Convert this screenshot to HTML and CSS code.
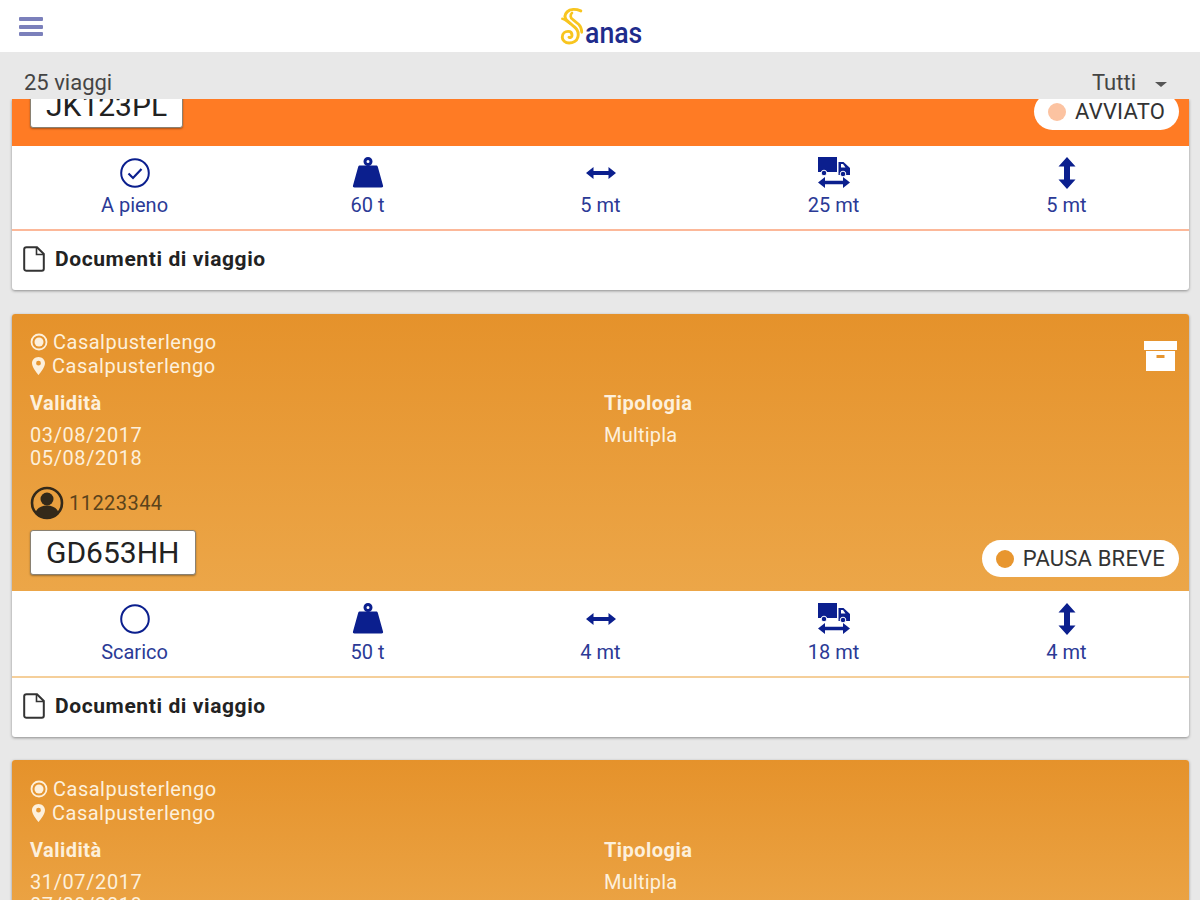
FILE: index.html
```html
<!DOCTYPE html>
<html lang="it">
<head>
  <meta charset="UTF-8" />
  <meta name="viewport" content="width=device-width, initial-scale=1" />
  <title>Anas - Viaggi</title>
  <link rel="stylesheet" href="styles.css">
</head>
<body>
  <svg class="icon-defs" width="0" height="0" aria-hidden="true">
    <defs>
      <symbol id="i-weight" viewBox="0 0 32 32">
        <circle cx="16" cy="4.500" r="3" fill="none" stroke="currentColor" stroke-width="3"/>
        <path d="M8 8.500h16c1 0 1.500.5 1.800 1.300L31 28.500c.4 1.300-.3 2-1.500 2H2.500c-1.200 0-1.900-.7-1.500-2L6.200 9.800C6.500 9 7 8.500 8 8.500z" fill="currentColor"/>
      </symbol>
      <symbol id="i-width" viewBox="0 0 32 32">
        <path d="M1 16l7.500-6v4h15v-4l7.500 6-7.500 6v-4h-15v4z" fill="currentColor"/>
      </symbol>
      <symbol id="i-length" viewBox="0 0 34 32">
        <path d="M1 0h19v15H1z" fill="currentColor"/>
        <path d="M21.500 5h5l6.500 6v7H21.500z" fill="currentColor"/>
        <path d="M24 7h2l2.500 3.500H24z" fill="#fff"/>
        <circle cx="7" cy="16" r="2.800" fill="currentColor" stroke="#fff" stroke-width="1"/>
        <circle cx="26" cy="17" r="2.800" fill="currentColor" stroke="#fff" stroke-width="1"/>
        <path d="M1 25.500l7-5.500v3.800h18V20l7 5.500-7 5.500v-3.800H8V31z" fill="currentColor"/>
      </symbol>
      <symbol id="i-height" viewBox="0 0 20 32">
        <path d="M10 0l8.500 9.500h-5.500v13h5.500L10 32l-8.500-9.500H7v-13H1.500z" fill="currentColor"/>
      </symbol>
      <symbol id="i-doc" viewBox="0 0 22 26">
        <path d="M3.500 1.200h10.500l6.800 6.800v14.800c0 1.200-.9 2-2 2H3.500c-1.200 0-2.300-.8-2.300-2V3.200c0-1.200 1.100-2 2.300-2z" fill="#fff" stroke="currentColor" stroke-width="2"/>
        <path d="M13.500 1.500v7h7" fill="none" stroke="currentColor" stroke-width="1.600"/>
      </symbol>
      <symbol id="i-origin" viewBox="0 0 18 18">
        <circle cx="9" cy="9" r="7.500" fill="none" stroke="currentColor" stroke-width="1.800"/>
        <circle cx="9" cy="9" r="4.500" fill="currentColor"/>
      </symbol>
      <symbol id="i-pin" viewBox="0 0 13 18">
        <path d="M6.500 0C2.900 0 0 2.800 0 6.300 0 11 6.500 18 6.500 18S13 11 13 6.300C13 2.800 10.100 0 6.500 0zm0 8.600a2.400 2.400 0 1 1 0-4.800 2.400 2.400 0 0 1 0 4.800z" fill="currentColor"/>
      </symbol>
      <symbol id="i-driver" viewBox="0 0 34 34">
        <circle cx="17" cy="17" r="15" fill="none" stroke="currentColor" stroke-width="2.600"/>
        <circle cx="17" cy="13" r="6.500" fill="currentColor"/>
        <path d="M5.500 27c1-5 6-7.500 11.500-7.500S27.500 22 28.500 27c-3 3.500-7 5.500-11.500 5.500S8.500 30.500 5.500 27z" fill="currentColor"/>
      </symbol>
      <symbol id="i-archive" viewBox="0 0 33 30">
        <path d="M0 0h33v9H0z" fill="currentColor"/>
        <path d="M2 10h29v20H2zm10.500 4v3h8v-3z" fill="currentColor" fill-rule="evenodd"/>
      </symbol>
    </defs>
  </svg>

  <header class="topbar">
    <button class="menu-btn" aria-label="Menu">
      <span></span><span></span><span></span>
    </button>
    <div class="logo">
      <svg class="logo-mark" viewBox="0 0 24 38" aria-hidden="true">
        <g fill="none" stroke="#f8c51f" stroke-linecap="round">
          <path d="M21 3C16 1 10 1 7 4 4 7 4 10 7 13l7 6c4 3 5 7 4 11-1 4-5 6-9 6-4 0-7-3-7-6 0-4 3-6 6-6 3 0 4 2 4 4s-2 3-3 2" stroke-width="3"/>
          <path d="M12 5c-2 2-2 5 1 7l6 5c2 2 3 5 3 8" stroke-width="2.800"/>
          <path d="M2 11c3 0 5 3 8 5" stroke-width="2.400"/>
        </g>
      </svg>
      <span class="logo-text">anas</span>
    </div>
  </header>

  <div class="toolbar">
    <span class="count">25 viaggi</span>
    <div class="filter"><span>Tutti</span><i class="caret"></i></div>
  </div>

  <main class="list">
    <article class="card card-started card-cut">
      <div class="card-head">
        <div class="plate-row">
          <div class="plate">JK123PL</div>
          <div class="status"><i class="dot dot-started"></i>AVVIATO</div>
        </div>
      </div>
      <div class="stats stats-started">
        <div class="stat">
          <svg class="stat-icon" viewBox="0 0 32 32" aria-hidden="true">
            <circle cx="16" cy="16" r="13.800" fill="none" stroke="currentColor" stroke-width="2"/>
            <path d="M9.500 16.500l4.500 4.500 8.500-9" fill="none" stroke="currentColor" stroke-width="2.200"/>
          </svg>
          <span>A pieno</span>
        </div>
        <div class="stat"><svg class="stat-icon"><use href="#i-weight"/></svg><span>60 t</span></div>
        <div class="stat"><svg class="stat-icon"><use href="#i-width"/></svg><span>5 mt</span></div>
        <div class="stat"><svg class="stat-icon stat-wide"><use href="#i-length"/></svg><span>25 mt</span></div>
        <div class="stat"><svg class="stat-icon"><use href="#i-height"/></svg><span>5 mt</span></div>
      </div>
      <div class="card-foot"><svg class="doc-icon"><use href="#i-doc"/></svg>Documenti di viaggio</div>
    </article>

    <article class="card">
      <div class="card-head">
        <div class="head-top">
          <div class="route">
            <div class="route-line"><svg class="route-origin"><use href="#i-origin"/></svg>Casalpusterlengo</div>
            <div class="route-line"><svg class="route-pin"><use href="#i-pin"/></svg>Casalpusterlengo</div>
          </div>
          <svg class="archive-icon"><use href="#i-archive"/></svg>
        </div>
        <div class="info">
          <div>
            <div class="info-title">Validità</div>
            <div class="info-value">03/08/2017<br>05/08/2018</div>
          </div>
          <div>
            <div class="info-title">Tipologia</div>
            <div class="info-value info-plain">Multipla</div>
          </div>
        </div>
        <div class="driver"><svg class="driver-icon"><use href="#i-driver"/></svg>11223344</div>
        <div class="plate-row">
          <div class="plate">GD653HH</div>
          <div class="status"><i class="dot"></i>PAUSA BREVE</div>
        </div>
      </div>
      <div class="stats">
        <div class="stat">
          <svg class="stat-icon" viewBox="0 0 32 32" aria-hidden="true">
            <circle cx="16" cy="16" r="13.800" fill="none" stroke="currentColor" stroke-width="2"/>
          </svg>
          <span>Scarico</span>
        </div>
        <div class="stat"><svg class="stat-icon"><use href="#i-weight"/></svg><span>50 t</span></div>
        <div class="stat"><svg class="stat-icon"><use href="#i-width"/></svg><span>4 mt</span></div>
        <div class="stat"><svg class="stat-icon stat-wide"><use href="#i-length"/></svg><span>18 mt</span></div>
        <div class="stat"><svg class="stat-icon"><use href="#i-height"/></svg><span>4 mt</span></div>
      </div>
      <div class="card-foot"><svg class="doc-icon"><use href="#i-doc"/></svg>Documenti di viaggio</div>
    </article>

    <article class="card card-last">
      <div class="card-head">
        <div class="head-top">
          <div class="route">
            <div class="route-line"><svg class="route-origin"><use href="#i-origin"/></svg>Casalpusterlengo</div>
            <div class="route-line"><svg class="route-pin"><use href="#i-pin"/></svg>Casalpusterlengo</div>
          </div>
        </div>
        <div class="info">
          <div>
            <div class="info-title">Validità</div>
            <div class="info-value">31/07/2017<br>07/08/2018</div>
          </div>
          <div>
            <div class="info-title">Tipologia</div>
            <div class="info-value info-plain">Multipla</div>
          </div>
        </div>
      </div>
    </article>
  </main>
</body>
</html>
```

FILE: styles.css
```css
* {
  box-sizing: border-box;
}
html, body {
  height: 100%;
}
body {
  margin: 0;
  display: flex;
  flex-direction: column;
  overflow: hidden;
  background-color: #e8e8e8;
  color: #222;
  font-family: Roboto, "Liberation Sans", sans-serif;
  font-size: 20px;
}
.icon-defs {
  position: absolute;
}

/* top bar */
.topbar {
  height: 52px;
  flex: none;
  display: flex;
  justify-content: center;
  position: relative;
  background-color: #fff;
}
.menu-btn {
  position: absolute;
  left: 19px;
  top: 17px;
  width: 24px;
  height: 19px;
  padding: 0;
  border: none;
  background: none;
  display: flex;
  flex-direction: column;
  justify-content: space-between;
}
.menu-btn span {
  display: block;
  height: 4px;
  border-radius: 1px;
  background-color: #7b80bb;
}
.logo {
  display: flex;
  align-items: flex-end;
  height: 45px;
}
.logo-mark {
  width: 24px;
  height: 37px;
  margin-right: 1px;
}
.logo-text {
  color: #1f2c8c;
  font-size: 29px;
  line-height: 24px;
  font-weight: 500;
  transform: scaleX(.92);
  transform-origin: left;
  width: 56px;
}

/* count + filter */
.toolbar {
  height: 47px;
  flex: none;
  display: flex;
  align-items: center;
  justify-content: space-between;
  padding: 14px 33px 0 24px;
  color: #444;
  font-size: 22px;
}
.caret {
  display: inline-block;
  margin-left: 19px;
  vertical-align: middle;
  border-left: 6px solid transparent;
  border-right: 6px solid transparent;
  border-top: 5px solid #555;
}

/* list */
.list {
  flex: 1;
  min-height: 0;
  overflow: hidden;
  padding: 0 11px 0 12px;
}
.card {
  margin-bottom: 23px;
  border-radius: 3px;
  background-color: #fff;
  box-shadow: 0 1px 3px rgba(0, 0, 0, .4);
}
.card-cut {
  margin-bottom: 24px;
  border-radius: 0 0 3px 3px;
}
.card-head {
  padding: 16px 10px 16px 18px;
  border-radius: 3px 3px 0 0;
  color: #fdf0dc;
  background: linear-gradient(#e5922b, #eca648);
}
.card-last .card-head {
  padding-top: 17px;
}
.card-started .card-head {
  padding: 0 10px 18px 18px;
  border-radius: 0;
  background: #ff7b24;
}
.card-cut .plate {
  margin-top: -16px;
}
.card-cut .status {
  margin-top: -8px;
}
.head-top {
  display: flex;
  justify-content: space-between;
  align-items: flex-start;
}
.route-line {
  display: flex;
  align-items: center;
  height: 24px;
  line-height: 24px;
  letter-spacing: .5px;
}
.route-origin {
  width: 18px;
  height: 18px;
  margin-right: 5px;
}
.route-pin {
  width: 13px;
  height: 18px;
  margin: 0 7px 0 2px;
}
.archive-icon {
  width: 33px;
  height: 30px;
  margin: 11px 2px 0 0;
  color: #fff;
}
.info {
  display: grid;
  grid-template-columns: 574px 1fr;
  margin-top: 13px;
}
.info-title {
  line-height: 24px;
  font-weight: 700;
  letter-spacing: .45px;
}
.info-value {
  margin-top: 9px;
  line-height: 23px;
  letter-spacing: .6px;
}
.info-plain {
  letter-spacing: .2px;
}
.driver {
  display: flex;
  align-items: center;
  margin-top: 16px;
  height: 33px;
  color: #5b431b;
  letter-spacing: .45px;
}
.driver-icon {
  width: 34px;
  height: 34px;
  margin-right: 5px;
  color: #33291a;
}
.plate-row {
  display: flex;
  justify-content: space-between;
  align-items: flex-end;
  margin-top: 11px;
}
.card-cut .plate-row {
  margin-top: 0;
}
.plate {
  height: 45px;
  padding: 0 15px;
  border: 1px solid #8a8172;
  border-radius: 3px;
  background-color: #fff;
  color: #222;
  font-size: 30px;
  line-height: 43px;
  box-shadow: 0 1px 2px rgba(0, 0, 0, .35);
}
.status {
  display: flex;
  align-items: center;
  height: 37px;
  margin-bottom: -2px;
  padding: 0 14px;
  border-radius: 19px;
  background-color: #fff;
  color: #333;
  font-size: 22px;
  letter-spacing: .2px;
}
.dot {
  width: 18px;
  height: 18px;
  margin-right: 9px;
  border-radius: 50%;
  background-color: #e8962f;
}
.dot-started {
  background-color: #fcc3a1;
}

/* numbers row */
.stats {
  display: grid;
  grid-template-columns: repeat(5, 1fr);
  padding: 12px 6px 12px;
  border-bottom: 2px solid #f5cf9a;
}
.stats-started {
  padding-top: 11px;
  border-bottom-color: #fcb899;
}
.stat {
  display: flex;
  flex-direction: column;
  align-items: center;
  color: #2b3a96;
  font-size: 20px;
  line-height: 24px;
}
.stat-icon {
  width: 32px;
  height: 32px;
  margin-bottom: 5px;
  color: #0b1f8e;
}
.stats-started .stat-icon {
  margin-bottom: 4px;
}
.stat-wide {
  width: 34px;
}
.card-foot {
  display: flex;
  align-items: center;
  height: 59px;
  padding: 0 0 4px 11px;
  color: #222;
  font-weight: 700;
  font-size: 21px;
  letter-spacing: .6px;
}
.doc-icon {
  width: 22px;
  height: 26px;
  margin-right: 10px;
  color: #333;
}
```
